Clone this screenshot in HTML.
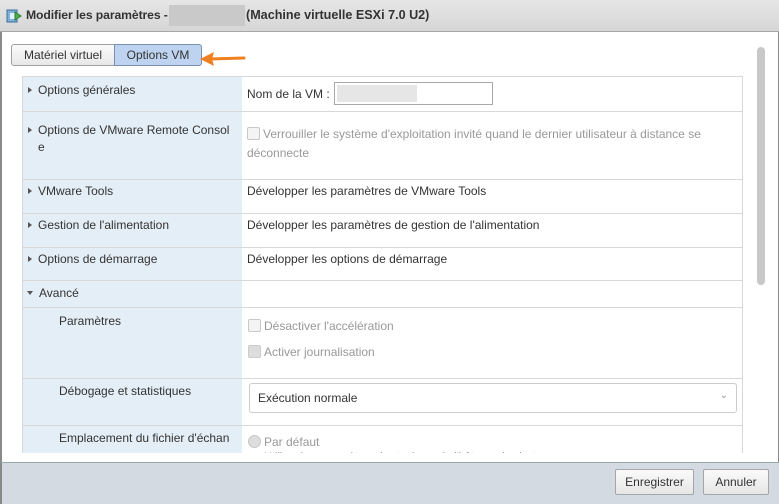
<!DOCTYPE html>
<html><head><meta charset="utf-8"><style>
*{box-sizing:border-box;margin:0;padding:0}
body{width:779px;height:504px;overflow:hidden;background:#fff;font-family:"Liberation Sans",Arial,sans-serif;font-size:12px;color:#333;position:relative}
.a{position:absolute}
.title{left:0;top:0;width:779px;height:32px;background:linear-gradient(#e6e6e6,#d6d6d6);border-bottom:1px solid #a8a8a8;font-weight:bold;font-size:12.6px;color:#333}
.win{left:0;top:32px;width:779px;height:430px;border-left:2px solid #8a8a8a;border-right:1px solid #8a8a8a}
.foot{left:0;top:462px;width:779px;height:42px;background:#d3dae1;border-top:1px solid #9aa;border-left:2px solid #8a8a8a}
.btn{height:26px;top:469px;border:1px solid #a6a6a6;border-radius:2px;background:linear-gradient(#fafafa,#e6e6e6);font-size:12px;text-align:center;line-height:24px;color:#333}
.clip{left:22px;top:76px;width:721px;height:377px;overflow:hidden;border:1px solid #d8d8d8;border-bottom:none}
.lc{left:0;top:0;width:219px;height:400px;background:#e4eef6}
.hl{left:0;height:1px;width:721px;background:#d8d8d8}
.t{position:absolute;white-space:nowrap}
.g{color:#999}
.cb{display:inline-block;width:13px;height:13px;border:1px solid #c8c8c8;border-radius:2px;background:#f4f4f4;vertical-align:-2px;margin-right:3px}
.tri{display:inline-block;width:0;height:0;border-top:3.5px solid transparent;border-bottom:3.5px solid transparent;border-left:4px solid #555;margin-right:6px;vertical-align:1px}
.trid{display:inline-block;width:0;height:0;border-left:3.5px solid transparent;border-right:3.5px solid transparent;border-top:4px solid #555;margin-right:6px;vertical-align:2px}
</style></head><body>
<div class="a title">
<svg class="a" style="left:6px;top:8px" width="16" height="16" viewBox="0 0 16 16"><rect x="1" y="2" width="10" height="12" fill="#7fb0d8" stroke="#3d6e99"/><rect x="4" y="5" width="6" height="6" fill="#dff0ff"/><path d="M9 4 L15 8 L9 12 Z" fill="#4caf50" stroke="#2e7d32"/></svg>
<span class="a" style="left:26px;top:8px;font-size:12.2px;letter-spacing:-0.1px">Modifier les paramètres -</span>
<div class="a" style="left:169px;top:5px;width:76px;height:21px;background:#c9c9c9"></div>
<span class="a" style="left:246px;top:8px">(Machine virtuelle ESXi 7.0 U2)</span>
</div>
<div class="a win"></div>
<div class="a" style="left:11px;top:44px;width:104px;height:22px;border:1px solid #a0a0a0;border-radius:3px 0 0 3px;background:linear-gradient(#fafafa,#e8e8e8);text-align:center;line-height:20px">Matériel virtuel</div>
<div class="a" style="left:114px;top:44px;width:88px;height:22px;border:1px solid #7a90b0;border-radius:0 3px 3px 0;background:#bdd3f0;text-align:center;line-height:20px">Options VM</div>
<svg class="a" style="left:198px;top:50px" width="48" height="18" viewBox="0 0 48 18"><path d="M46 8 L12 9" stroke="#f08020" stroke-width="3" stroke-linecap="round"/><path d="M2 9 L16 2 L14 9 L16 16 Z" fill="#f08020"/></svg>
<div class="a" style="left:757px;top:47px;width:8px;height:238px;border-radius:4px;background:#c8c8c8"></div>
<div class="a clip">
<div class="a lc"></div>
<div class="a hl" style="top:34px"></div>
<div class="a hl" style="top:102px"></div>
<div class="a hl" style="top:136px"></div>
<div class="a hl" style="top:170px"></div>
<div class="a hl" style="top:203px"></div>
<div class="a hl" style="top:230px"></div>
<div class="a hl" style="top:301px"></div>
<div class="a hl" style="top:348px"></div>
<span class="t" style="left:5px;top:6px"><i class="tri"></i>Options générales</span>
<span class="t" style="left:224px;top:10px">Nom de la VM :</span>
<div class="a" style="left:311px;top:5px;width:159px;height:23px;border:1px solid #a8a8a8;background:#fff"><div class="a" style="left:2px;top:2px;width:80px;height:17px;background:#e6e6e6"></div></div>
<span class="t" style="left:5px;top:46px"><i class="tri"></i>Options de VMware Remote Consol</span>
<span class="t" style="left:15px;top:63px">e</span>
<span class="t g" style="left:224px;top:50px"><i class="cb"></i>Verrouiller le système d'exploitation invité quand le dernier utilisateur à distance se</span>
<span class="t g" style="left:224px;top:69px">déconnecte</span>
<span class="t" style="left:5px;top:107px"><i class="tri"></i>VMware Tools</span>
<span class="t" style="left:224px;top:107px">Développer les paramètres de VMware Tools</span>
<span class="t" style="left:5px;top:141px"><i class="tri"></i>Gestion de l'alimentation</span>
<span class="t" style="left:224px;top:141px">Développer les paramètres de gestion de l'alimentation</span>
<span class="t" style="left:5px;top:175px"><i class="tri"></i>Options de démarrage</span>
<span class="t" style="left:224px;top:175px">Développer les options de démarrage</span>
<span class="t" style="left:4px;top:209px"><i class="trid"></i>Avancé</span>
<span class="t" style="left:36px;top:237px">Paramètres</span>
<span class="t g" style="left:225px;top:242px"><i class="cb"></i>Désactiver l'accélération</span>
<span class="t g" style="left:225px;top:268px"><i class="cb" style="background:#ddd;border-color:#ccc"></i>Activer journalisation</span>
<span class="t" style="left:36px;top:307px">Débogage et statistiques</span>
<div class="a" style="left:226px;top:306px;width:488px;height:30px;border:1px solid #ccc;border-radius:3px;background:#fff"><span class="t" style="left:8px;top:7px">Exécution normale</span><span class="t" style="right:8px;top:6px;color:#999;font-size:10px">&#8964;</span></div>
<span class="t" style="left:36px;top:354px">Emplacement du fichier d'échan</span>
<span class="t" style="left:36px;top:372px">ge</span>
<span class="t g" style="left:225px;top:358px"><i class="cb" style="border-radius:50%;background:#ddd"></i>Par défaut</span>
<span class="t g" style="left:241px;top:374px;font-size:11px">Utiliser les paramètres de stockage de l'hôte ou du cluster</span>
</div>
<div class="a foot"></div>
<div class="a btn" style="left:615px;width:79px">Enregistrer</div>
<div class="a btn" style="left:703px;width:66px">Annuler</div>
</body></html>
